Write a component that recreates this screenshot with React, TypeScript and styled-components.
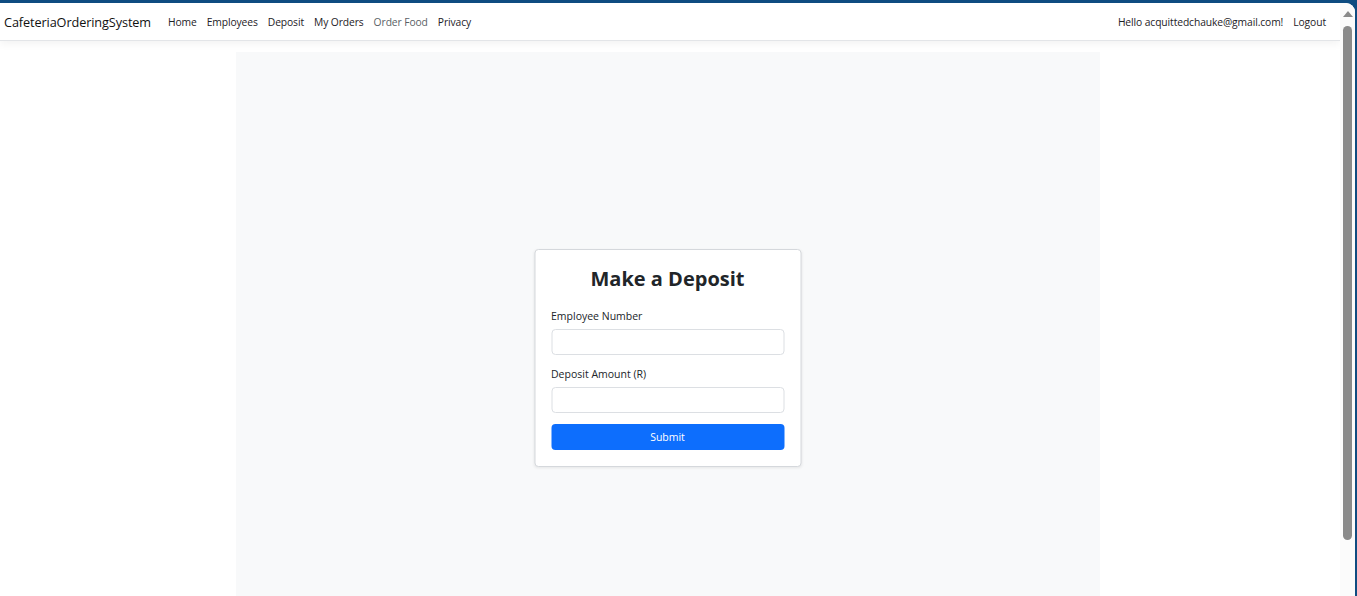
import React from "react";
import styled, { createGlobalStyle } from "styled-components";

const Global = createGlobalStyle`
  html, body { margin: 0; padding: 0; height: 100%; overflow: hidden; }
  body { background: #0f4c81; font-family: "Open Sans", "Noto Sans", Arial, sans-serif; color: #212529; }
  #root { height: 100%; }
`;

const Frame = styled.div`
  margin-top: 3px;
  margin-right: 2px;
  height: calc(100% - 3px);
  background: #fff;
  border-top-right-radius: 9px;
  overflow: hidden;
  display: flex;
`;

const Page = styled.div`
  flex: 1;
  min-width: 0;
  display: flex;
  flex-direction: column;
`;

const NavBar = styled.nav`
  height: 37px;
  flex: none;
  display: flex;
  align-items: center;
  padding: 0 9px 0 4px;
  border-bottom: 1px solid #e3e5e8;
  box-shadow: 0 3px 8px rgba(0, 0, 0, 0.05);
  background: #fff;
`;

const Brand = styled.a`
  font-size: 12.7px;
  color: #111;
  margin-right: 12px;
  letter-spacing: -0.1px;
`;

const NavList = styled.div`
  display: flex;
  align-items: center;
  flex: 1;
`;

const NavLink = styled.a<{ $muted?: boolean }>`
  font-size: 10.3px;
  padding: 0 5px;
  color: ${(p) => (p.$muted ? "#5a5f66" : "#1d2126")};
  letter-spacing: -0.1px;
`;

const RightNav = styled.div`
  display: flex;
  align-items: center;
`;

const Main = styled.main`
  width: 864px;
  margin: 11px 0 0 236px;
  height: 611px;
  flex: none;
  background: #f8f9fa;
  display: flex;
  align-items: center;
  justify-content: center;
`;

const Card = styled.div`
  width: 233px;
  padding: 16px;
  background: #fff;
  border: 1px solid #d5d8dc;
  border-radius: 4px;
  box-shadow: 0 1px 3px rgba(0, 0, 0, 0.08);
  transform: translateX(-0.5px);
`;

const Title = styled.h2`
  margin: 0 0 16px;
  text-align: center;
  font-size: 20px;
  line-height: 26px;
  font-weight: 700;
  color: #212529;
`;

const Group = styled.div`
  margin-bottom: 11px;
`;

const Label = styled.label`
  display: block;
  font-size: 10.5px;
  line-height: 17px;
  margin-bottom: 4px;
  color: #212529;
`;

const Input = styled.input`
  display: block;
  box-sizing: border-box;
  width: 100%;
  height: 26px;
  border: 1px solid #dcdfe3;
  border-radius: 4px;
  background: #fff;
  outline: none;
`;

const Button = styled.button`
  display: block;
  width: 100%;
  height: 26px;
  border: none;
  border-radius: 4px;
  background: #0d6efd;
  color: #fff;
  font-family: inherit;
  font-size: 10.5px;
`;

const ScrollBar = styled.div`
  width: 15px;
  flex: none;
  background: #fbfbfb;
  display: flex;
  flex-direction: column;
  align-items: center;
`;

const Arrow = styled.div`
  margin-top: 8px;
  width: 0;
  height: 0;
  border-left: 5px solid transparent;
  border-right: 5px solid transparent;
  border-bottom: 6px solid #8a8a8a;
`;

const Thumb = styled.div`
  margin-top: 9px;
  width: 9px;
  height: 514px;
  background: #8a8a8a;
  border-radius: 5px;
`;

export default function App() {
  return (
    <>
      <Global />
      <Frame>
        <Page>
          <NavBar>
            <Brand>CafeteriaOrderingSystem</Brand>
            <NavList>
              <NavLink>Home</NavLink>
              <NavLink>Employees</NavLink>
              <NavLink>Deposit</NavLink>
              <NavLink>My Orders</NavLink>
              <NavLink $muted>Order Food</NavLink>
              <NavLink>Privacy</NavLink>
            </NavList>
            <RightNav>
              <NavLink>Hello acquittedchauke@gmail.com!</NavLink>
              <NavLink>Logout</NavLink>
            </RightNav>
          </NavBar>
          <Main>
            <Card>
              <Title>Make a Deposit</Title>
              <Group>
                <Label>Employee Number</Label>
                <Input />
              </Group>
              <Group>
                <Label>Deposit Amount (R)</Label>
                <Input />
              </Group>
              <Button>Submit</Button>
            </Card>
          </Main>
        </Page>
        <ScrollBar>
          <Arrow />
          <Thumb />
        </ScrollBar>
      </Frame>
    </>
  );
}
